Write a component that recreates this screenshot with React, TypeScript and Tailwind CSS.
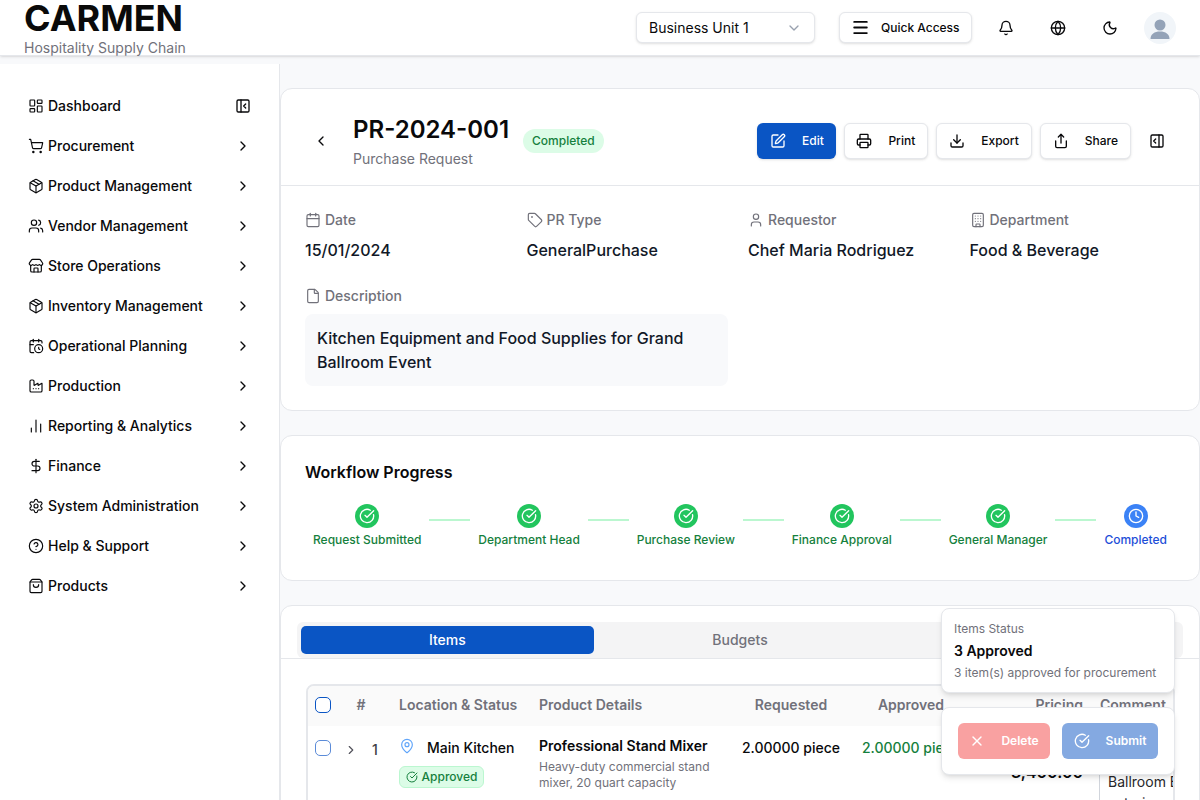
import React from "react";
import {
  LayoutDashboard, ShoppingCart, Package, Users, Store, CalendarClock, Factory, ChartNoAxesColumn,
  DollarSign, Settings, CircleHelp, ShoppingBag, PanelLeftClose, PanelRightOpen, ChevronRight, ChevronDown,
  ChevronLeft, Menu, Bell, Globe, Moon, SquarePen, Printer, Download, Share, Calendar, Tag, User, Building,
  File, CircleCheckBig, Clock, MapPin, X,
} from "lucide-react";

const nav = [
  [ShoppingCart, "Procurement"],
  [Package, "Product Management"],
  [Users, "Vendor Management"],
  [Store, "Store Operations"],
  [Package, "Inventory Management"],
  [CalendarClock, "Operational Planning"],
  [Factory, "Production"],
  [ChartNoAxesColumn, "Reporting & Analytics"],
  [DollarSign, "Finance"],
  [Settings, "System Administration"],
  [CircleHelp, "Help & Support"],
  [ShoppingBag, "Products"],
] as const;

const steps = ["Request Submitted", "Department Head", "Purchase Review", "Finance Approval", "General Manager"];

function ActionButton({ icon: Icon, label, className }: { icon: any; label: string; className: string }) {
  return (
    <button className={"flex h-9 items-center gap-4 rounded-md text-xs font-medium shadow-sm " + className}>
      <Icon size={16} />
      {label}
    </button>
  );
}

function Info({ icon: Icon, label, value }: { icon: any; label: string; value: string }) {
  return (
    <div>
      <div className="flex items-center gap-1 text-sm font-medium leading-5 text-[#71717a]">
        <Icon size={16} strokeWidth={1.75} />
        {label}
      </div>
      <div className="mt-2 text-base font-medium leading-6 text-[#111827]">{value}</div>
    </div>
  );
}

export default function App() {
  const outline = "border border-gray-200 bg-white text-[#09090b] pr-3";
  return (
    <div className="h-screen w-full overflow-hidden bg-[#f8f9fb] font-['Inter',sans-serif] text-[#09090b]">
      <header className="flex h-14 items-center justify-between border-b border-gray-200 bg-white pl-6 pr-6 shadow-sm">
        <div className="self-start">
          <div className="text-4xl font-bold leading-9 text-[#0a0a0a]">CARMEN</div>
          <div className="mt-1 text-sm leading-4 text-[#71717a]">Hospitality Supply Chain</div>
        </div>
        <div className="flex items-center">
          <div className="flex h-[31px] w-[179px] items-center justify-between rounded-md border border-gray-200 bg-white pl-3 pr-3 text-sm shadow-sm">
            Business Unit 1
            <ChevronDown size={16} className="text-gray-400" />
          </div>
          <button className="ml-6 flex h-[31px] w-[133px] items-center gap-[11px] whitespace-nowrap rounded-md border border-gray-200 bg-white pl-[11px] text-xs font-medium shadow-sm">
            <Menu size={19} strokeWidth={2.25} />
            Quick Access
          </button>
          <Bell size={16} className="ml-[26px]" />
          <Globe size={16} className="ml-[36px]" />
          <Moon size={16} className="ml-[36px]" />
          <div className="ml-[26px] flex h-8 w-8 items-center justify-center overflow-hidden rounded-full bg-[#f1f5f9]">
            <svg width="32" height="32" viewBox="0 0 32 32" fill="#94a3b8">
              <circle cx="16" cy="13" r="5.5" />
              <path d="M6.500 27c0-5 4-7.500 9.500-7.500s9.500 2.500 9.500 7.500z" />
            </svg>
          </div>
        </div>
      </header>

      <div className="mt-2 flex h-[736px]">
        <aside className="h-full w-[280px] shrink-0 border-r border-gray-200 bg-white pl-7 pr-[29px] pt-[22px]">
          <div className="flex h-10 items-center gap-1 text-sm font-medium">
            <LayoutDashboard size={16} strokeWidth={1.75} />
            <span className="flex-1">Dashboard</span>
            <PanelLeftClose size={16} className="mr-[-1px]" />
          </div>
          {nav.map(([Icon, label]) => (
            <div key={label} className="flex h-10 items-center gap-1 text-sm font-medium">
              <Icon size={16} strokeWidth={1.75} />
              <span className="flex-1">{label}</span>
              <ChevronRight size={16} className="mr-[-1px]" />
            </div>
          ))}
        </aside>

        <main className="min-w-0 flex-1 space-y-6 pt-6">
          <section className="rounded-xl border border-gray-200 bg-white">
            <div className="flex h-[97px] items-center border-b border-gray-200 pl-8 pr-[34px] pt-2">
              <ChevronLeft size={16} />
              <div className="ml-6">
                <div className="text-2xl font-semibold leading-8">PR-2024-001</div>
                <div className="mt-[3px] text-sm leading-5 text-[#71717a]">Purchase Request</div>
              </div>
              <span className="ml-[14px] rounded-full bg-[#dcfce7] px-[9px] py-1 text-xs font-medium leading-4 text-[#15803d]">Completed</span>
              <div className="ml-auto flex items-center gap-2">
                <ActionButton icon={SquarePen} label="Edit" className="w-[79px] justify-center bg-[#0a55c4] text-white" />
                <ActionButton icon={Printer} label="Print" className={outline + " pl-[11px]"} />
                <ActionButton icon={Download} label="Export" className={outline + " pl-3"} />
                <ActionButton icon={Share} label="Share" className={outline + " pl-3"} />
                <PanelRightOpen size={16} className="ml-[10px]" />
              </div>
            </div>
            <div className="pb-6 pl-6 pr-[28px] pt-6">
              <div className="grid grid-cols-4 gap-5">
                <Info icon={Calendar} label="Date" value="15/01/2024" />
                <Info icon={Tag} label="PR Type" value="GeneralPurchase" />
                <Info icon={User} label="Requestor" value="Chef Maria Rodriguez" />
                <Info icon={Building} label="Department" value="Food & Beverage" />
              </div>
              <div className="mt-6 flex items-center gap-1 text-sm font-medium leading-5 text-[#71717a]">
                <File size={16} strokeWidth={1.75} />
                Description
              </div>
              <div className="mt-2 w-[423px] rounded-lg bg-[#f8f9fb] px-3 py-3 text-base font-medium leading-6 text-[#111827]">
                Kitchen Equipment and Food Supplies for Grand Ballroom Event
              </div>
            </div>
          </section>

          <section className="h-[146px] rounded-xl border border-gray-200 bg-white px-6 pt-6">
            <div className="text-base font-semibold leading-6">Workflow Progress</div>
            <div className="mt-5 flex items-start">
              {steps.map((s) => (
                <React.Fragment key={s}>
                  <div className="flex flex-col items-center px-2">
                    <div className="flex h-6 w-6 items-center justify-center rounded-full bg-[#22c55e] text-white">
                      <CircleCheckBig size={16} />
                    </div>
                    <div className="mt-1 text-xs font-medium leading-4 text-[#15803d]">{s}</div>
                  </div>
                  <div className="mt-[15px] h-0.5 flex-1 bg-[#bbf7d0]" />
                </React.Fragment>
              ))}
              <div className="flex flex-col items-center px-2">
                <div className="flex h-6 w-6 items-center justify-center rounded-full bg-[#3b82f6] text-white">
                  <Clock size={16} />
                </div>
                <div className="mt-1 text-xs font-medium leading-4 text-[#1d4ed8]">Completed</div>
              </div>
            </div>
          </section>

          <section className="rounded-xl border border-gray-200 bg-white">
            <div className="border-b border-gray-200 px-4 pt-4">
              <div className="flex h-9 rounded-md bg-[#f4f4f5] p-1 text-sm font-medium text-[#71717a]">
                <div className="flex flex-1 items-center justify-center rounded-[5px] bg-[#0a55c4] text-white">Items</div>
                <div className="flex flex-1 items-center justify-center">Budgets</div>
                <div className="flex-1" />
              </div>
            </div>
            <div className="ml-[25px] mr-6 mt-[25px] h-[200px] overflow-hidden rounded-lg border-2 border-gray-200">
              <table className="w-[868px] table-fixed border-collapse text-sm">
                <colgroup>
                  <col className="w-[33px]" />
                  <col className="w-[50px]" />
                  <col className="w-[140px]" />
                  <col className="w-[200px]" />
                  <col className="w-[120px]" />
                  <col className="w-[120px]" />
                  <col className="w-[120px]" />
                  <col className="w-[85px]" />
                </colgroup>
                <thead>
                  <tr className="h-10 bg-[#fafafa] font-semibold text-[#71717a]">
                    <th className="pb-0.5 pl-[7px] text-left font-semibold"><div className="h-4 w-4 rounded-[5px] border border-[#0a55c4] bg-white" /></th>
                    <th className="pb-0.5 pr-[10px] text-center font-semibold">#</th>
                    <th className="pb-0.5 pl-2 text-left font-semibold">Location &amp; Status</th>
                    <th className="pb-0.5 pl-2 text-left font-semibold">Product Details</th>
                    <th className="pb-0.5 text-center font-semibold">Requested</th>
                    <th className="pb-0.5 text-center font-semibold">Approved</th>
                    <th className="pb-0.5 pr-2 text-right font-semibold">Pricing</th>
                    <th className="pb-0.5 pl-[9px] text-left font-semibold">Comment</th>
                  </tr>
                </thead>
                <tbody>
                  <tr className="align-top">
                    <td className="pl-[7px] pt-[14px]"><div className="h-4 w-4 rounded-[5px] border border-[#5b8bd8] bg-white" /></td>
                    <td className="pt-[14px]">
                      <div className="flex items-center">
                        <ChevronRight size={14} className="ml-[3px] text-[#52525b]" />
                        <span className="ml-[14px] font-medium text-[#3f3f46]">1</span>
                      </div>
                    </td>
                    <td className="pl-2 pt-[12px]">
                      <div className="flex items-center font-medium leading-5">
                        <MapPin size={16} strokeWidth={1.75} className="mb-1 text-[#60a5fa]" />
                        <span className="ml-3">Main Kitchen</span>
                      </div>
                      <div className="mt-2 flex h-[22px] w-[85px] items-center justify-center gap-1 rounded-md border border-[#bbf7d0] bg-[#dcfce7] text-xs font-medium text-[#15803d]">
                        <CircleCheckBig size={12} />
                        Approved
                      </div>
                    </td>
                    <td className="pl-2 pt-[10px]">
                      <div className="font-semibold leading-5">Professional Stand Mixer</div>
                      <div className="mt-[3px] text-xs leading-4 text-[#71717a]">Heavy-duty commercial stand mixer, 20 quart capacity</div>
                    </td>
                    <td className="pt-[12px] text-center font-medium">2.00000 piece</td>
                    <td className="pt-[12px] text-center font-medium text-[#15803d]">2.00000 piece</td>
                    <td className="pr-2 pt-[34px] text-right text-base font-semibold">3,400.00</td>
                    <td className="pt-[45px]">
                      <div className="ml-2 h-[60px] overflow-hidden border-l border-gray-300 pl-2 text-[#27272a]">
                        <div className="whitespace-nowrap leading-[21px]">Ballroom Event</div>
                        <div className="whitespace-nowrap leading-[21px]">catering</div>
                      </div>
                    </td>
                  </tr>
                </tbody>
              </table>
            </div>
          </section>
        </main>
      </div>

      <div className="absolute left-[941px] top-[608px] w-[234px]">
        <div className="h-[85px] rounded-lg border border-gray-200 bg-white px-3 pt-3 shadow-md">
          <div className="text-xs leading-4 text-[#71717a]">Items Status</div>
          <div className="mt-1 text-sm font-semibold leading-5">3 Approved</div>
          <div className="mt-1 text-xs leading-4 text-[#71717a]">3 item(s) approved for procurement</div>
        </div>
        <div className="mt-[14px] flex h-[68px] items-center gap-3 rounded-lg border border-gray-200 bg-white px-4 shadow-md">
          <button className="flex h-9 w-[93px] items-center justify-center gap-4 rounded-md bg-[#f9a1a1] text-xs font-semibold text-white">
            <X size={16} />
            Delete
          </button>
          <button className="flex h-9 w-[96px] shrink-0 items-center justify-center gap-4 rounded-md bg-[#84a9e1] text-xs font-semibold text-white">
            <CircleCheckBig size={16} />
            Submit
          </button>
        </div>
      </div>
    </div>
  );
}
